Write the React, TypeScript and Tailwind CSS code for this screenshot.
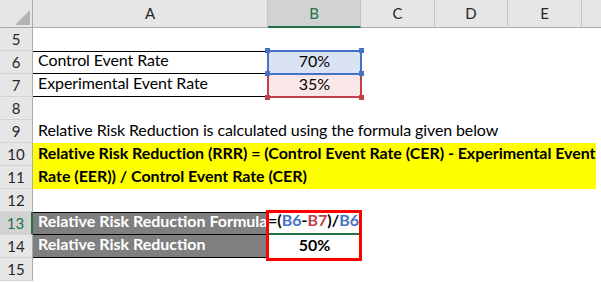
import React from 'react';

const cols = [
  { name: 'A', w: 'w-[235px]' },
  { name: 'B', w: 'w-[93px]', active: true },
  { name: 'C', w: 'w-[74px]' },
  { name: 'D', w: 'w-[73px]' },
  { name: 'E', w: 'w-[74px]' },
];

function Handle({ pos, color }: { pos: string; color: string }) {
  return <span className={`absolute w-[5px] h-[5px] ${pos} ${color}`} />;
}

function Row({ n, active, children }: { n: number; active?: boolean; children?: React.ReactNode }) {
  return (
    <div className="flex h-[23px]">
      <div
        className={`w-[33px] shrink-0 flex items-center justify-center border-b border-[#d4d4d4] text-[15px] ${
          active
            ? 'bg-[#d2d2d2] text-[#217346] border-r-2 border-r-[#217346]'
            : 'bg-[#e6e6e6] text-[#262626] border-r border-r-[#ababab]'
        }`}
      >
        {n}
      </div>
      <div className="flex-1 flex text-[16px] text-black">{children}</div>
    </div>
  );
}

export default function App() {
  return (
    <div className="relative w-[601px] h-[282px] overflow-hidden bg-white font-['Lato',sans-serif]">
      {/* column headers */}
      <div className="flex h-[28px] bg-[#e6e6e6] text-[15px] text-[#262626]">
        <div className="relative w-[33px] shrink-0 border-r border-b border-[#ababab]">
          <svg className="absolute left-[15px] top-[10px]" width="15" height="15" viewBox="0 0 15 15">
            <polygon points="15,0 15,15 0,15" fill="#b4b4b4" />
          </svg>
        </div>
        {cols.map((c) => (
          <div
            key={c.name}
            className={`${c.w} shrink-0 flex items-center justify-center border-r border-r-[#c4c4c4] ${
              c.active ? 'bg-[#d2d2d2] text-[#217346] border-b-2 border-b-[#217346]' : 'border-b border-b-[#ababab]'
            }`}
          >
            {c.name}
          </div>
        ))}
        <div className="flex-1 border-b border-[#ababab]" />
      </div>

      <Row n={5} />
      <Row n={6}>
        <div className="w-[235px] shrink-0 flex items-end pl-[5px] pb-[1px] border-y border-black tracking-[-0.1px]">Control Event Rate</div>
        <div className="relative w-[93px] shrink-0 flex items-end justify-center pb-[1px]">
          <div className="absolute -left-[1px] -top-[1px] -right-[1px] -bottom-[1px] bg-[#dae3f3] border-2 border-[#4472c4]" />
          <span className="relative">70%</span>
          <Handle pos="-left-[3px] -top-[3px]" color="bg-[#4472c4]" />
          <Handle pos="-right-[3px] -top-[3px]" color="bg-[#4472c4]" />
        </div>
      </Row>
      <Row n={7}>
        <div className="w-[235px] shrink-0 flex items-end pl-[5px] pb-[1px] border-b border-black tracking-[-0.1px]">Experimental Event Rate</div>
        <div className="relative w-[93px] shrink-0 flex items-end justify-center pb-[1px]">
          <div className="absolute -left-[1px] top-[1px] -right-[1px] -bottom-[1px] bg-[#f9e7e7] border-2 border-t-0 border-[#c0404a]" />
          <span className="relative">35%</span>
          <Handle pos="-left-[3px] -top-[3px]" color="bg-[#4472c4]" />
          <Handle pos="-right-[3px] -top-[3px]" color="bg-[#4472c4]" />
          <Handle pos="-left-[3px] -bottom-[3px]" color="bg-[#c0404a]" />
          <Handle pos="-right-[3px] -bottom-[3px]" color="bg-[#c0404a]" />
        </div>
      </Row>
      <Row n={8} />
      <Row n={9}>
        <div className="flex items-end pl-[5px] pb-[1px] whitespace-nowrap tracking-[-0.12px]">
          Relative Risk Reduction is calculated using the formula given below
        </div>
      </Row>
      <Row n={10}>
        <div className="w-[563px] shrink-0 flex items-end pl-[5px] pb-[1px] bg-[#ffff00] font-bold whitespace-nowrap tracking-[-0.04px]">
          Relative Risk Reduction (RRR) = (Control Event Rate (CER) - Experimental Event
        </div>
      </Row>
      <Row n={11}>
        <div className="w-[563px] shrink-0 flex items-end pl-[5px] pb-[1px] bg-[#ffff00] font-bold whitespace-nowrap tracking-[-0.04px]">
          Rate (EER)) / Control Event Rate (CER)
        </div>
      </Row>
      <Row n={12} />
      <Row n={13} active>
        <div className="w-[235px] shrink-0 flex items-end pl-[5px] pb-[1px] bg-[#7f7f7f] text-white font-bold border-y border-black whitespace-nowrap">
          Relative Risk Reduction Formula
        </div>
        <div className="relative w-[93px] shrink-0 flex items-end pb-[1px] border-b-2 border-[#217346] font-bold whitespace-nowrap">
          <span>=(</span>
          <span className="text-[#4472c4]">B6</span>
          <span>-</span>
          <span className="text-[#c0404a]">B7</span>
          <span>)/</span>
          <span className="text-[#4472c4]">B6</span>
          <span className="ml-[1px] mb-[1px] w-px h-[17px] bg-black" />
        </div>
      </Row>
      <Row n={14}>
        <div className="w-[235px] shrink-0 flex items-end pl-[5px] pb-[1px] bg-[#7f7f7f] text-white font-bold border-b border-black">
          Relative Risk Reduction
        </div>
        <div className="w-[93px] shrink-0 flex items-end justify-center pb-[1px] font-bold">50%</div>
      </Row>
      <Row n={15} />

      {/* annotation box */}
      <div className="absolute left-[266px] top-[210px] w-[96px] h-[51px] border-[3px] border-[#ff0000]" />
    </div>
  );
}
